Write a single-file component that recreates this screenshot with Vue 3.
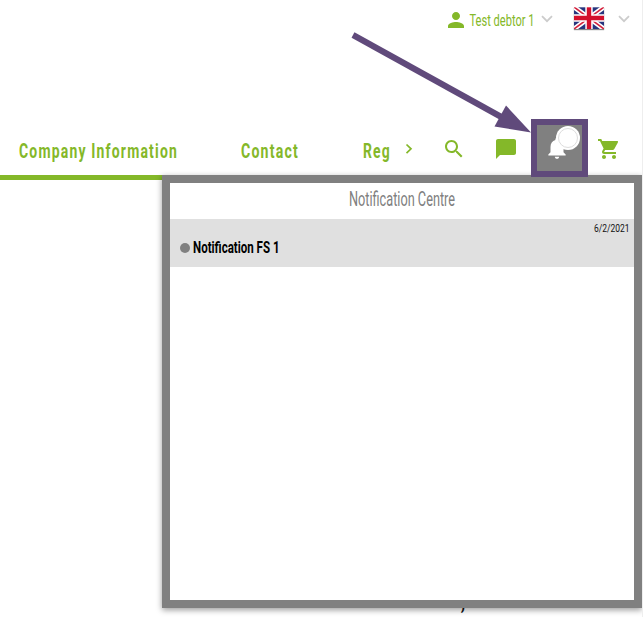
<script setup>
const navItems = [
  { label: 'Company Information', width: 159, cls: 'company' },
  { label: 'Contact', width: 58, cls: 'contact' },
  { label: 'Reg', width: 28, cls: 'reg' },
]
</script>

<template>
  <div class="page">
    <header class="topbar">
      <svg class="icon" viewBox="0 0 24 24"><path d="M12 12c2.21 0 4-1.79 4-4s-1.79-4-4-4-4 1.79-4 4 1.79 4 4 4zm0 2c-2.67 0-8 1.34-8 4v2h16v-2c0-2.66-5.33-4-8-4z" /></svg>
      <svg class="user-name" width="66" height="24"><text x="-.5" y="18" textLength="65" lengthAdjust="spacingAndGlyphs">Test debtor 1</text></svg>
      <svg class="caret" viewBox="0 0 12 8"><path d="M1 1.2 6 6.2 11 1.2" /></svg>
      <svg class="flag" viewBox="0 0 30 22">
        <rect width="30" height="22" fill="#27357e" />
        <path d="M0 0 30 22M30 0 0 22" stroke="#fff" stroke-width="4.8" />
        <path d="M0 0 12 8.8M30 22 18 13.2M30 0 18 8.8M0 22 12 13.2" stroke="#d4213d" stroke-width="1.6" />
        <path d="M15 0V22M0 11H30" stroke="#fff" stroke-width="7.4" />
        <path d="M15 0V22M0 11H30" stroke="#d30f2c" stroke-width="4.4" />
        <path d="M0 .5H30" stroke="#fff" stroke-opacity=".3" />
      </svg>
      <svg class="caret last" viewBox="0 0 12 8"><path d="M1 1.2 6 6.2 11 1.2" /></svg>
    </header>

    <nav class="nav">
      <svg v-for="n in navItems" :key="n.label" class="nav-item" :class="n.cls" :width="n.width" height="26">
        <text x="0" y="20" :textLength="n.width" lengthAdjust="spacingAndGlyphs">{{ n.label }}</text>
      </svg>
      <svg class="more" viewBox="0 0 8 12"><path d="M1.5 1.5 6 5.8 1.5 10.1" /></svg>
      <svg class="icon search" viewBox="0 0 24 24"><path d="M15.5 14h-.79l-.28-.27C15.41 12.59 16 11.11 16 9.5 16 5.91 13.09 3 9.5 3S3 5.91 3 9.5 5.91 16 9.5 16c1.61 0 3.09-.59 4.23-1.57l.27.28v.79l5 4.99L20.49 19l-4.99-5zm-6 0C7.01 14 5 11.99 5 9.5S7.01 5 9.5 5 14 7.01 14 9.5 11.99 14 9.5 14z" /></svg>
      <svg class="icon chat" viewBox="0 0 24 24"><path d="M20 2H4c-1.1 0-2 .9-2 2v18l4-4h14c1.1 0 2-.9 2-2V4c0-1.1-.9-2-2-2z" /></svg>
      <div class="bell-button">
        <svg class="icon bell" viewBox="0 0 24 24"><path d="M12 22c1.1 0 2-.9 2-2h-4c0 1.1.89 2 2 2zm6-6v-5c0-3.07-1.64-5.64-4.5-6.32V4c0-.83-.67-1.5-1.5-1.5s-1.5.67-1.5 1.5v.68C7.63 5.36 6 7.92 6 11v5l-2 2v1h16v-1l-2-2z" /></svg>
        <span class="badge"></span>
      </div>
      <svg class="icon cart" viewBox="0 0 24 24"><path d="M7 18c-1.1 0-1.99.9-1.99 2S5.9 22 7 22s2-.9 2-2-.9-2-2-2zM1 2v2h2l3.6 7.59-1.35 2.45c-.16.28-.25.61-.25.96 0 1.1.9 2 2 2h12v-2H7.42c-.14 0-.25-.11-.25-.25l.03-.12.9-1.63h7.45c.75 0 1.41-.41 1.75-1.03l3.58-6.49A1 1 0 0 0 20 4H5.21l-.94-2H1zm16 16c-1.1 0-1.99.9-1.99 2s.89 2 1.99 2 2-.9 2-2-.9-2-2-2z" /></svg>
    </nav>

    <main class="content"><span>,</span></main>

    <section class="panel">
      <div class="panel-title">
        <svg width="107" height="26"><text x="0" y="20" textLength="106" lengthAdjust="spacingAndGlyphs">Notification Centre</text></svg>
      </div>
      <article class="row">
        <svg class="date" width="36" height="13"><text x="0" y="10" textLength="35.5" lengthAdjust="spacingAndGlyphs">6/2/2021</text></svg>
        <div class="message">
          <i class="dot"></i>
          <svg width="88" height="20"><text x="0" y="15" textLength="86.5" lengthAdjust="spacingAndGlyphs">Notification FS 1</text></svg>
        </div>
      </article>
    </section>

    <svg class="arrow" viewBox="0 0 190 110" width="190" height="110">
      <path d="M8 10 160 94" stroke="#604a7b" stroke-width="6" />
      <path d="M186 107.5 161 80.5 149.5 101.5Z" fill="#604a7b" />
    </svg>
  </div>
</template>

<style>
body { margin: 0; background: #fff; overflow: hidden; }
</style>

<style scoped>
.page {
  position: relative;
  box-sizing: border-box;
  width: 643px;
  height: 617px;
  overflow: hidden;
  border-right: 1px solid #eee;
  background: #fff;
  font-family: Roboto, "Liberation Sans", sans-serif;
}
svg { display: block; flex: none; overflow: visible; }
.icon { width: 24px; height: 24px; fill: #84b829; }
.topbar { display: flex; height: 111px; padding: 8px 0 0 444px; box-sizing: border-box; }
.user-name { margin-left: 2px; font-size: 17px; fill: #84b829; }
.caret { width: 12px; height: 8px; margin: 7px 0 0 5px; fill: none; stroke: #ccc; stroke-width: 1.8; }
.flag { width: 30px; height: 22px; margin: -1px 0 0 21px; box-shadow: 0 1px 1px #888; overflow: hidden; }
.caret.last { margin-left: 14px; }
.nav { display: flex; align-items: flex-start; height: 69px; box-sizing: border-box; border-bottom: 5px solid #84b829; }
.nav-item { margin-top: 27px; fill: #84b829; font-size: 20px; font-weight: 700; letter-spacing: 1.7px; }
.company { margin-left: 19px; }
.contact { margin-left: 63px; }
.reg { margin-left: 64px; }
.more { width: 8px; height: 12px; margin: 32px 0 0 14px; fill: none; stroke: #84b829; stroke-width: 1.7; }
.search { margin: 26px 0 0 29px; }
.chat { margin: 26px 0 0 27.5px; }
.bell-button {
  position: relative;
  box-sizing: border-box;
  width: 57px;
  height: 58px;
  margin: 8px 0 0 13.5px;
  padding: 10px 0 0 7px;
  border: 6px solid #604a7b;
  background: #808080;
  z-index: 3;
}
.bell { width: 26px; height: 26px; fill: #fff; }
.badge {
  position: absolute;
  top: 1px;
  left: 19px;
  width: 24px;
  height: 24px;
  border-radius: 50%;
  background: #fff;
}
.badge::after {
  content: "";
  display: block;
  box-sizing: border-box;
  width: 20px;
  height: 20px;
  margin: 2px;
  border: 1px solid #ddd;
  border-radius: 50%;
}
.cart { margin: 26px 0 0 9px; }
.content { padding: 413px 0 0 462px; font-size: 20px; font-style: italic; line-height: 20px; color: #111; }
.panel {
  position: absolute;
  top: 175px;
  left: 162px;
  box-sizing: border-box;
  width: 480px;
  height: 433px;
  border: 8px solid #808080;
  background: #fff;
  box-shadow: 0 2px 6px rgba(0, 0, 0, .4);
  z-index: 2;
}
.panel-title { display: flex; justify-content: center; height: 36px; padding-top: 3px; box-sizing: border-box; fill: #808080; font-size: 19.5px; font-weight: 400; }
.row { display: flex; flex-direction: column; height: 48px; background: #e0e0e0; }
.date { align-self: flex-end; margin: 3px 4px 0 0; font-size: 11px; fill: #111; }
.message { display: flex; align-items: center; gap: 3px; padding-left: 10px; margin-top: 3px; font-size: 16px; font-weight: 700; }
.dot { width: 10px; height: 10px; border-radius: 50%; background: #808080; }
.arrow { position: absolute; left: 345px; top: 25px; z-index: 4; }
</style>
